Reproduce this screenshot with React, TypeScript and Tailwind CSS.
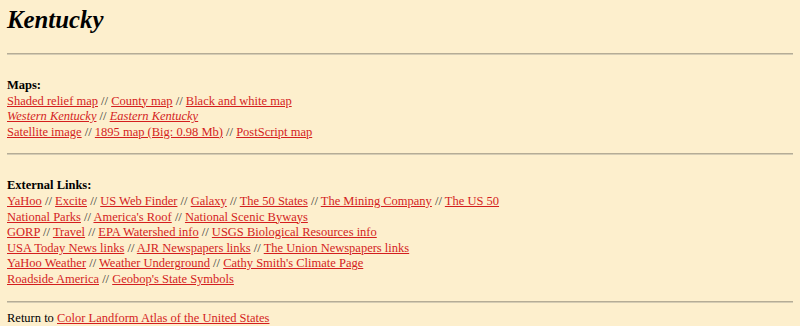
const serif = { fontFamily: '"Liberation Serif", "Times New Roman", serif' };

type Row = { links: string[]; italic?: boolean };

const maps: Row[] = [
  { links: ["Shaded relief map", "County map", "Black and white map"] },
  { links: ["Western Kentucky", "Eastern Kentucky"], italic: true },
  { links: ["Satellite image", "1895 map (Big: 0.98 Mb)", "PostScript map"] },
];

const external: Row[] = [
  { links: ["YaHoo", "Excite", "US Web Finder", "Galaxy", "The 50 States", "The Mining Company", "The US 50"] },
  { links: ["National Parks", "America's Roof", "National Scenic Byways"] },
  { links: ["GORP", "Travel", "EPA Watershed info", "USGS Biological Resources info"] },
  { links: ["USA Today News links", "AJR Newspapers links", "The Union Newspapers links"] },
  { links: ["YaHoo Weather", "Weather Underground", "Cathy Smith's Climate Page"] },
  { links: ["Roadside America", "Geobop's State Symbols"] },
];

const Link = ({ children, italic }: { children: string; italic?: boolean }) => (
  <a href="#" className={`text-[#d41e1e] underline ${italic ? "italic" : ""}`}>
    {children}
  </a>
);

const LinkRow = ({ row }: { row: Row }) => (
  <div className="whitespace-nowrap">
    {row.links.map((l, i) => (
      <span key={l}>
        {i > 0 && <span className="text-[#333]"> // </span>}
        <Link italic={row.italic}>{l}</Link>
      </span>
    ))}
  </div>
);

const Rule = ({ className }: { className: string }) => (
  <div className={`h-[2px] border-t border-t-[#b5ac96] border-b border-b-[#d5ccb4] ${className}`} />
);

export default function App() {
  return (
    <div className="min-h-[326px] w-full bg-[#fdefcd] text-black px-[7px] pt-[5px] text-[12.5px] leading-[15.6px]" style={serif}>
      <h1 className="h-[30px] text-[24.8px] leading-[30px] font-bold italic">Kentucky</h1>

      <Rule className="mt-[18px]" />

      <div className="mt-[23px]">
        <div className="font-bold">Maps:</div>
        {maps.map((r, i) => (
          <LinkRow key={i} row={r} />
        ))}
      </div>

      <Rule className="mt-[13px]" />

      <div className="mt-[23px]">
        <div className="font-bold">External Links:</div>
        {external.map((r, i) => (
          <LinkRow key={i} row={r} />
        ))}
      </div>

      <Rule className="mt-[13px]" />

      <div className="mt-[8px]">
        Return to <Link>Color Landform Atlas of the United States</Link>
      </div>
    </div>
  );
}
